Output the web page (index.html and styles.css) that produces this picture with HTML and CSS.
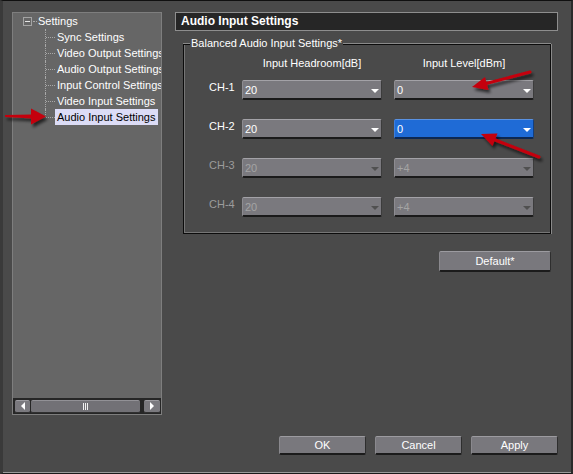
FILE: index.html
```html
<!DOCTYPE html>
<html>
<head>
<meta charset="utf-8">
<title>Audio Input Settings</title>
<link rel="stylesheet" href="styles.css">
</head>
<body>
<div class="window">
  <div class="main">
    <div class="panel">
      <div class="tree">
        <div class="root"><span class="expander"></span><span class="root-dots"></span><span class="root-label">Settings</span></div>
        <ul class="children">
          <li><span class="hdots"></span><span class="label">Sync Settings</span></li>
          <li><span class="hdots"></span><span class="label">Video Output Settings</span></li>
          <li><span class="hdots"></span><span class="label">Audio Output Settings</span></li>
          <li><span class="hdots"></span><span class="label">Input Control Settings</span></li>
          <li><span class="hdots"></span><span class="label">Video Input Settings</span></li>
          <li><span class="hdots"></span><span class="label selected">Audio Input Settings</span></li>
        </ul>
      </div>
      <div class="hscroll">
        <span class="sbtn"><i class="tri-left"></i></span>
        <span class="thumb"><i class="grip"></i></span>
        <span class="sbtn sbtn-right"><i class="tri-right"></i></span>
      </div>
    </div>
    <div class="content">
      <div class="title">Audio Input Settings</div>
      <div class="group">
        <div class="legend">Balanced Audio Input Settings*</div>
        <div class="grid heads">
          <span></span>
          <span class="colhead">Input Headroom[dB]</span>
          <span class="colhead">Input Level[dBm]</span>
        </div>
        <div class="grid rows">
          <span class="ch">CH-1</span>
          <div class="sel"><span>20</span><i class="caret"></i></div>
          <div class="sel"><span>0</span><i class="caret"></i></div>

          <span class="ch">CH-2</span>
          <div class="sel"><span>20</span><i class="caret"></i></div>
          <div class="sel sel-active"><span>0</span><i class="caret"></i></div>

          <span class="ch ch-off">CH-3</span>
          <div class="sel sel-off"><span>20</span><i class="caret"></i></div>
          <div class="sel sel-off"><span>+4</span><i class="caret"></i></div>

          <span class="ch ch-off">CH-4</span>
          <div class="sel sel-off"><span>20</span><i class="caret"></i></div>
          <div class="sel sel-off"><span>+4</span><i class="caret"></i></div>
        </div>
      </div>
      <div class="default-row"><button class="btn btn-default">Default*</button></div>
    </div>
  </div>
  <div class="footer">
    <button class="btn btn-foot">OK</button>
    <button class="btn btn-foot">Cancel</button>
    <button class="btn btn-foot">Apply</button>
  </div>
  <svg class="arrows" width="573" height="474" viewBox="0 0 573 474">
    <defs>
      <filter id="sh" x="-20%" y="-50%" width="150%" height="250%">
        <feDropShadow dx="2" dy="3" stdDeviation="1.6" flood-color="#000" flood-opacity="0.65"/>
      </filter>
    </defs>
    <g fill="#c4060c" stroke="#c4060c" filter="url(#sh)">
      <polygon points="5,115 33,114.5 33,118.5 5,117" stroke="none"/>
      <polygon points="46,116.5 31,108.5 31,124.5" stroke="none"/>
      <line x1="530" y1="72" x2="486" y2="83.5" stroke-width="3" stroke-linecap="round"/>
      <polygon points="472,87 488.5,90 485,77" stroke="none"/>
      <line x1="539" y1="157" x2="494" y2="139.5" stroke-width="3" stroke-linecap="round"/>
      <polygon points="481,134 497.5,133.5 492.5,146" stroke="none"/>
    </g>
  </svg>
</div>
</body>
</html>
```
FILE: styles.css
```css
html, body {
  margin: 0;
  padding: 0;
  background: #4a4a4a;
}

.window {
  position: relative;
  width: 573px;
  height: 474px;
  box-sizing: border-box;
  background: #4a4a4a;
  border-top: 1px solid #101010;
  border-left: 3px solid #3a3a3a;
  border-right: 2px solid #2a2a2a;
  border-bottom: 1px solid #1a1a1a;
  box-shadow: inset 0 -1px 0 #9a9a9a;
  padding: 11px 13px 0 9px;
  font-family: "Liberation Sans", Arial, sans-serif;
  font-size: 11px;
  color: #ffffff;
  overflow: hidden;
}

.main {
  display: flex;
  gap: 13px;
  height: 403px;
}

/* ---------- left tree panel ---------- */
.panel {
  width: 150px;
  box-sizing: border-box;
  border: 1px solid #7e7e7e;
  background: #666666;
  display: flex;
  flex-direction: column;
  overflow: hidden;
}

.tree {
  flex: 1;
  overflow: hidden;
}

.root {
  display: flex;
  align-items: center;
  height: 16px;
  padding-left: 10px;
}

.expander {
  width: 9px;
  height: 9px;
  box-sizing: border-box;
  border: 1px solid #a4a4a4;
  background: linear-gradient(#e6e6e6, #e6e6e6) center / 5px 1px no-repeat;
}

.root-dots {
  width: 4px;
  margin: 0 1px 0 1px;
  border-top: 1px dotted #a8a8a8;
}

.root-label {
  line-height: 16px;
  white-space: nowrap;
}

.children {
  list-style: none;
  margin: 0 0 0 32px;
  padding: 0;
}

.children li {
  position: relative;
  display: flex;
  align-items: center;
  height: 16px;
}

.children li::before {
  content: "";
  position: absolute;
  left: 0;
  top: 0;
  bottom: 0;
  border-left: 1px dotted #a8a8a8;
}

.children li:last-child::before {
  bottom: 8px;
}

.hdots {
  flex: none;
  width: 9px;
  margin-left: 1px;
  border-top: 1px dotted #a8a8a8;
}

.label {
  padding: 0 3px 0 2px;
  line-height: 16px;
  white-space: nowrap;
}

.label.selected {
  background: #dcdcf6;
  color: #000000;
}

.hscroll {
  flex: none;
  height: 16px;
  background: #262626;
  display: flex;
  align-items: center;
  padding: 0 1px 0 2px;
}

.sbtn {
  flex: none;
  width: 15px;
  height: 13px;
  box-sizing: border-box;
  background: #7a797e;
  border-top: 1px solid #9c9ba0;
  border-bottom: 1px solid #303030;
  border-radius: 2px;
  display: flex;
  align-items: center;
  justify-content: center;
}

.sbtn-right {
  width: 16px;
}

.tri-left {
  width: 0;
  height: 0;
  border-top: 4px solid transparent;
  border-bottom: 4px solid transparent;
  border-right: 4px solid #ffffff;
}

.tri-right {
  width: 0;
  height: 0;
  border-top: 4px solid transparent;
  border-bottom: 4px solid transparent;
  border-left: 4px solid #ffffff;
}

.thumb {
  flex: 1;
  height: 13px;
  box-sizing: border-box;
  margin: 0 4px 0 1px;
  background: #727176;
  border-top: 1px solid #929196;
  border-bottom: 1px solid #303030;
  border-radius: 2px;
  display: flex;
  align-items: center;
  justify-content: center;
}

.grip {
  width: 5px;
  height: 7px;
  background: repeating-linear-gradient(to right, #f0f0f0 0 1px, transparent 1px 2px);
}

/* ---------- right content ---------- */
.content {
  flex: 1;
  display: flex;
  flex-direction: column;
}

.title {
  height: 19px;
  box-sizing: border-box;
  border: 1px solid #8e8e8e;
  background: #262626;
  font-weight: bold;
  font-size: 12px;
  line-height: 17px;
  padding-left: 5px;
}

.group {
  margin: 13px 7px 0 8px;
  border: 1px solid #0c0c0c;
  box-shadow: 0 -1px 0 #8a8a8a, 1px 0 0 #8a8a8a, inset 1px 0 0 #767676, inset 0 -1px 0 #767676;
  padding: 0 0 16px 0;
}

.legend {
  display: table;
  margin: -8px 0 0 6px;
  padding: 0 1px;
  background: #4a4a4a;
  line-height: 13px;
}

.grid {
  display: grid;
  grid-template-columns: 21px 140px 140px;
  column-gap: 12px;
  padding-left: 25px;
}

.heads {
  margin-top: 7px;
  line-height: 13px;
}

.colhead {
  text-align: center;
  white-space: nowrap;
}

.rows {
  margin-top: 10px;
  row-gap: 19px;
}

.ch {
  align-self: start;
  margin-top: 1px;
  line-height: 13px;
  white-space: nowrap;
}

.ch-off {
  color: #9c9c9c;
}

.sel {
  height: 20px;
  box-sizing: border-box;
  display: flex;
  justify-content: space-between;
  align-items: flex-start;
  background: #7a797e;
  border-top: 1px solid #a3a2a7;
  border-left: 1px solid #8d8c91;
  border-right: 1px solid #3c3c3c;
  border-bottom: 2px solid #1a1a1a;
  border-radius: 2px;
  padding: 3px 2px 0 2px;
  line-height: 13px;
}

.caret {
  width: 0;
  height: 0;
  margin-top: 5px;
  border-left: 4px solid transparent;
  border-right: 4px solid transparent;
  border-top: 4px solid #ffffff;
}

.sel-active {
  background: #1f6bd6;
  border-top-color: #5a92e2;
  border-left-color: #3d7fdc;
  border-right-color: #133f7e;
  border-bottom-color: #0d2852;
}

.sel-off {
  color: #a4a4a4;
}

.sel-off .caret {
  border-top-color: #505050;
}

.default-row {
  display: flex;
  justify-content: flex-end;
  margin: 17px 7px 0 0;
}

.btn {
  box-sizing: border-box;
  margin: 0;
  padding: 0;
  background: #79787d;
  color: #ffffff;
  font-family: "Liberation Sans", Arial, sans-serif;
  font-size: 11px;
  border-top: 1px solid #9c9ba0;
  border-left: 1px solid #8a898e;
  border-right: 1px solid #2e2e2e;
  border-bottom: 2px solid #1b1b1b;
  border-radius: 2px;
  text-align: center;
}

.btn-default {
  width: 112px;
  height: 21px;
  line-height: 18px;
}

.footer {
  display: flex;
  justify-content: flex-end;
  gap: 9px;
  margin-top: 21px;
}

.btn-foot {
  width: 87px;
  height: 19px;
  line-height: 16px;
}

/* annotation arrows drawn over the dialog */
.arrows {
  position: absolute;
  left: -3px;
  top: -1px;
  pointer-events: none;
}
```
